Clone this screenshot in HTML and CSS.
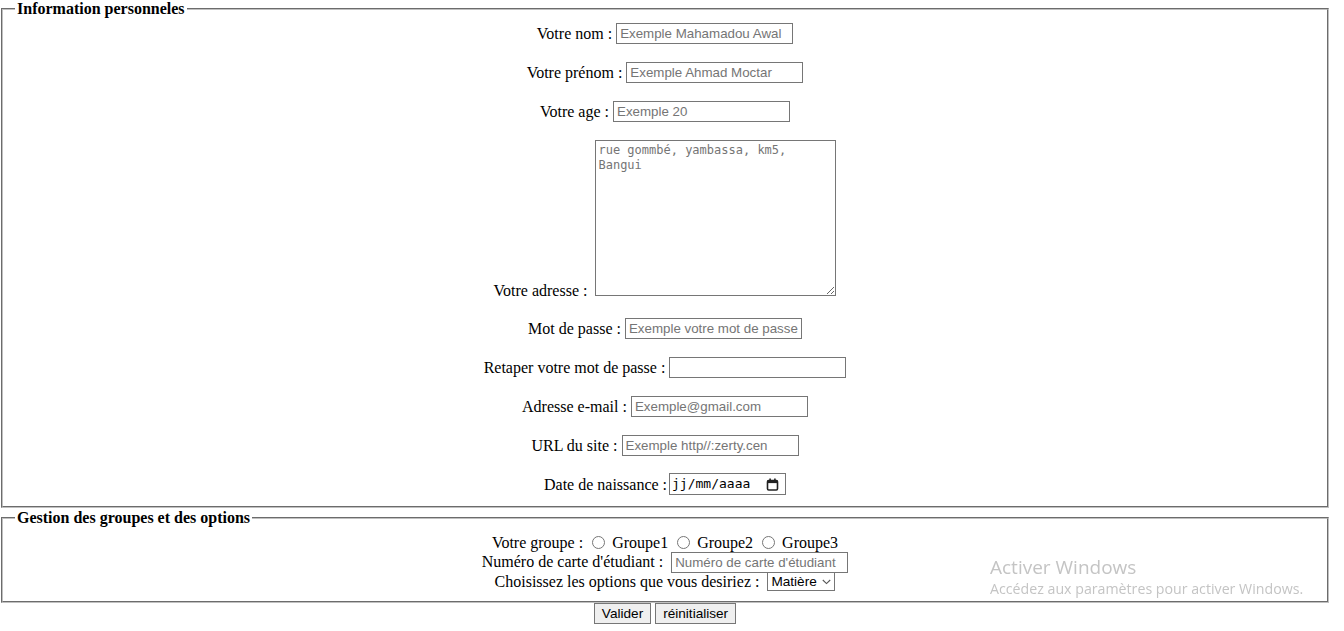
FILE: index.html
```html
<!DOCTYPE html>
<html lang="fr">
<head>
<meta charset="utf-8">
<title>Formulaire</title>
<link rel="stylesheet" href="styles.css">
</head>
<body>
<form class="form">
  <fieldset class="box">
    <legend class="box-title">Information personneles</legend>
    <div class="rows">
      <div class="row"><label>Votre nom : </label><input class="field" type="text" placeholder="Exemple Mahamadou Awal"></div>
      <div class="row"><label>Votre prénom : </label><input class="field" type="text" placeholder="Exemple Ahmad Moctar"></div>
      <div class="row"><label>Votre age : </label><input class="field" type="text" placeholder="Exemple 20"></div>
      <div class="row row-area"><label>Votre adresse : </label><textarea class="area" placeholder="rue gommbé, yambassa, km5, Bangui"></textarea></div>
      <div class="row"><label>Mot de passe : </label><input class="field" type="password" placeholder="Exemple votre mot de passe"></div>
      <div class="row"><label>Retaper votre mot de passe : </label><input class="field" type="password"></div>
      <div class="row"><label>Adresse e-mail : </label><input class="field" type="text" placeholder="Exemple@gmail.com"></div>
      <div class="row"><label>URL du site : </label><input class="field" type="text" placeholder="Exemple http//:zerty.cen"></div>
      <div class="row"><label>Date de naissance :</label><span class="date"><span class="date-text">jj/mm/aaaa</span><svg class="cal" width="13" height="13" viewBox="0 0 13 13"><rect x="1.5" y="2.5" width="10" height="9.5" rx="1.2" fill="none" stroke="#222" stroke-width="1.6"/><rect x="1.5" y="2.5" width="10" height="2.6" fill="#222"/><rect x="3.3" y="0.5" width="1.6" height="2.5" fill="#222"/><rect x="8.1" y="0.5" width="1.6" height="2.5" fill="#222"/></svg></span></div>
    </div>
  </fieldset>
  <fieldset class="box box-second">
    <legend class="box-title">Gestion des groupes et des options</legend>
    <div class="lines">
      <div class="line">Votre groupe : <input class="radio" type="radio" name="g"> Groupe1 <input class="radio" type="radio" name="g"> Groupe2 <input class="radio" type="radio" name="g"> Groupe3</div>
      <div class="line">Numéro de carte d'étudiant : <input class="field" type="text" placeholder="Numéro de carte d'étudiant"></div>
      <div class="line">Choisissez les options que vous desiriez : <span class="select-wrap"><select class="select"><option>Matière</option></select><svg class="chev" width="9" height="6" viewBox="0 0 9 6"><path d="M0.8 1 L4.5 4.6 L8.2 1" fill="none" stroke="#555" stroke-width="1.1"/></svg></span></div>
    </div>
  </fieldset>
  <div class="actions">
    <button class="btn" type="submit">Valider</button>
    <button class="btn" type="reset">réinitialiser</button>
  </div>
</form>
<div class="watermark">
  <div class="wm-title">Activer Windows</div>
  <div class="wm-sub">Accédez aux paramètres pour activer Windows.</div>
</div>
</body>
</html>
```
FILE: styles.css
```css
html, body {
  margin: 0;
  padding: 0;
  background: #fff;
}
body {
  font-family: "Liberation Serif", "Times New Roman", serif;
  font-size: 16px;
  color: #000;
}
.form {
  width: 1330px;
}
.box {
  margin: 0 1px;
  padding: 0 12px 11px 12px;
  border: 2px groove #c0c0c0;
}
.box-title {
  font-weight: bold;
  padding: 0 2px;
  line-height: 18px;
}
.box-second {
  margin-top: 1px;
  padding-bottom: 9px;
}
.rows {
  display: flex;
  flex-direction: column;
  align-items: center;
  gap: 18px;
  padding-top: 5px;
}
.row {
  display: flex;
  align-items: flex-end;
  justify-content: center;
  height: 21px;
  line-height: 18px;
}
.row label {
  padding-bottom: 1px;
  white-space: pre;
}
.row-area {
  height: auto;
  margin-bottom: 4px;
}
.row-area label {
  padding-bottom: 0;
  margin-bottom: -4px;
}
.field {
  box-sizing: border-box;
  width: 177px;
  height: 21px;
  font-family: "Liberation Sans", Arial, sans-serif;
  font-size: 13.33px;
  padding: 1px 1px 1px 3px;
  border: 1px solid #767676;
  border-radius: 0;
  background: #fff;
  color: #000;
  margin: 0;
}
.field::placeholder {
  color: #757575;
}
.area {
  box-sizing: border-box;
  width: 241px;
  height: 156px;
  font-family: "DejaVu Sans Mono", "Liberation Mono", monospace;
  font-size: 12px;
  line-height: 15px;
  padding: 2px 2px;
  border: 1px solid #767676;
  border-radius: 0;
  margin: 0 0 0 4px;
  resize: both;
}
.area::placeholder {
  color: #757575;
}
.date {
  box-sizing: border-box;
  width: 117px;
  height: 22px;
  border: 1px solid #767676;
  display: inline-flex;
  align-items: center;
  justify-content: space-between;
  padding: 0 6px 0 2px;
  font-family: "DejaVu Sans Mono", "Liberation Mono", monospace;
  font-size: 13px;
  color: #000;
  margin-left: 2px;
}
.lines {
  display: flex;
  flex-direction: column;
  align-items: center;
  padding-top: 6px;
}
.line {
  height: 19.5px;
  display: flex;
  align-items: center;
  justify-content: center;
  white-space: pre;
}
.line .field {
  margin-left: 4px;
}
.radio {
  width: 13px;
  height: 13px;
  margin: 0 3px 0 5px;
  accent-color: #767676;
}
.select-wrap {
  position: relative;
  display: inline-block;
  margin-left: 4px;
}
.select {
  appearance: none;
  -webkit-appearance: none;
  box-sizing: border-box;
  width: 68px;
  height: 19px;
  border: 1px solid #767676;
  border-radius: 0;
  background: #fff;
  font-family: "Liberation Sans", Arial, sans-serif;
  font-size: 13.6px;
  padding: 0 0 0 3px;
  color: #000;
}
.chev {
  position: absolute;
  right: 4px;
  top: 7px;
  pointer-events: none;
}
.actions {
  display: flex;
  justify-content: center;
  gap: 4px;
  padding-top: 0;
}
.btn {
  box-sizing: border-box;
  height: 21px;
  font-family: "Liberation Sans", Arial, sans-serif;
  font-size: 13.6px;
  padding: 1px 7px;
  border: 1px solid #767676;
  border-radius: 0;
  background: #efefef;
  color: #000;
  margin: 0;
}
.watermark {
  position: fixed;
  left: 990px;
  top: 556px;
  color: #c4c4c4;
  font-family: "Open Sans", "Noto Sans", sans-serif;
  pointer-events: none;
}
.wm-title {
  font-size: 19px;
  line-height: 22px;
}
.wm-sub {
  font-size: 14.2px;
  line-height: 22px;
}
```
